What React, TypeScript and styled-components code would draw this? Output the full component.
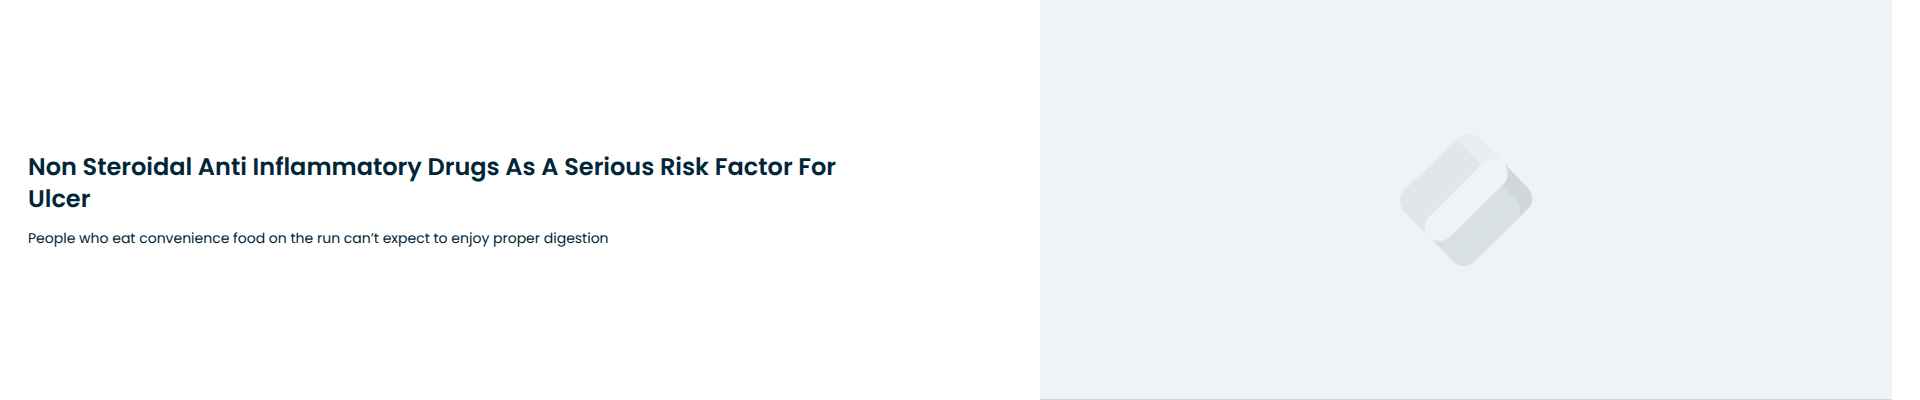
import React from "react";
import styled, { createGlobalStyle } from "styled-components";

const GlobalStyle = createGlobalStyle`
  *, *::before, *::after { box-sizing: border-box; }
  body { margin: 0; background: #ffffff; }
`;

const Hero = styled.section`
  display: grid;
  grid-template-columns: 1012px 852px;
  padding: 0 28px;
  height: 400px;
  overflow: hidden;
  color: #012638;
  font-family: Poppins, Inter, sans-serif;
  text-rendering: geometricPrecision;
`;

const Copy = styled.div`
  display: flex;
  flex-direction: column;
  justify-content: center;
  gap: 12px;
  padding-right: 160px;
`;

const Title = styled.h1`
  margin: 0;
  font-size: 24px;
  line-height: 32px;
  font-weight: 600;
`;

const TitleLine = styled.span`
  display: block;
  white-space: nowrap;
`;

const Summary = styled.p`
  margin: 0;
  font-size: 14px;
  line-height: 20px;
  font-weight: 400;
  white-space: nowrap;
`;

const Cover = styled.div`
  display: flex;
  align-items: center;
  justify-content: center;
  background: #eef3f6;
  border-bottom: 1px solid #d2d9db;
  border-radius: 4px 4px 0 0;
`;

const Mark = styled.svg`
  display: block;
  width: 134px;
  height: 135px;
`;

function PlaceholderMark() {
  return (
    <Mark viewBox="57 36 402 405" aria-hidden="true">
      <path
        fill="#e1e6e8"
        d="M232 60L75 208Q60 224 60 244Q60 262 73 275L155 357L302 133Z"
      />
      <path
        fill="#e8edf0"
        d="M232 60L236 55Q249 41 266 41Q282 41 295 53L378 137L302 133Z"
      />
      <path
        fill="#cfd7d9"
        d="M376 134L443 203Q457 218 457 237Q457 252 446 265L415 295L340 220Z"
      />
      <path
        fill="#d9e0e2"
        d="M155 357L217 422Q232 438 251 438Q268 438 283 425L415 295C424 277 422 253 407 237L366 197L300 200Z"
      />
      <path
        fill="#eef3f6"
        d="M147 290L307 131C323 115 349 111 368 127C388 145 388 174 371 192L210 350C194 365 170 367 152 354C130 339 128 310 147 290Z"
      />
    </Mark>
  );
}

export default function App() {
  return (
    <>
      <GlobalStyle />
      <Hero>
        <Copy>
          <Title>
            <TitleLine>
              Non Steroidal Anti Inflammatory Drugs As A Serious Risk Factor For
            </TitleLine>
            <TitleLine>Ulcer</TitleLine>
          </Title>
          <Summary>
            People who eat convenience food on the run can’t expect to enjoy
            proper digestion
          </Summary>
        </Copy>
        <Cover>
          <PlaceholderMark />
        </Cover>
      </Hero>
    </>
  );
}
